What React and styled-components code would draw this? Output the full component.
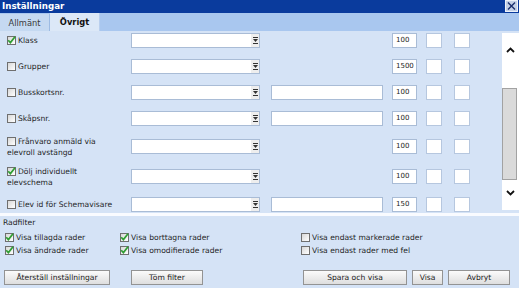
import React from 'react';
import styled, { createGlobalStyle } from 'styled-components';

const Global = createGlobalStyle`
  html, body { margin: 0; padding: 0; width: 519px; height: 288px; overflow: hidden; background: #d5e3f6; }
  body { font-family: "DejaVu Sans", Verdana, sans-serif; }
  * { box-sizing: border-box; }
`;

const Window = styled.div`
  width: 519px;
  height: 288px;
  display: flex;
  flex-direction: column;
  background: #d5e3f6;
  font-family: "DejaVu Sans", Verdana, sans-serif;
  font-size: 7.6px;
  color: #1f1f1f;
  overflow: hidden;
`;

const TitleBar = styled.div`
  height: 13px;
  flex: none;
  background: #0a3b9d;
  display: flex;
  align-items: flex-start;
  justify-content: space-between;
  padding: 0 1px 0 2px;
`;

const Title = styled.span`
  color: #ffffff;
  font-weight: bold;
  font-size: 8.7px;
  line-height: 13px;
`;

const CloseBtn = styled.div`
  width: 13px;
  height: 12px;
  border: 1px solid #eef2f9;
  background: #c4d1e7;
  display: flex;
  align-items: center;
  justify-content: center;
`;

const TabBar = styled.div`
  height: 18px;
  flex: none;
  background: #a9c7ef;
  display: flex;
  align-items: flex-end;
`;

const Tab = styled.div`
  width: 50px;
  height: ${p => (p.$active ? '18px' : '17px')};
  background: ${p => (p.$active ? '#dce8f7' : '#c5d9f1')};
  border-right: 1px solid ${p => (p.$active ? '#b9cfee' : '#9dbbe3')};
  display: flex;
  align-items: center;
  justify-content: center;
  font-size: 8.3px;
  font-weight: ${p => (p.$active ? 'bold' : 'normal')};
  color: ${p => (p.$active ? '#111' : '#3a3a3a')};
`;

const ScrollArea = styled.div`
  height: 182px;
  flex: none;
  display: flex;
  overflow: hidden;
`;

const List = styled.div`
  flex: 1;
  margin-top: -3.5px;
  display: flex;
  flex-direction: column;
`;

const Row = styled.div`
  display: grid;
  grid-template-columns: 131px 140px 121px 34px 28px 16px;
  align-items: center;
  min-height: 26px;
  padding: 4px 0;
  flex: none;
`;

const Label = styled.div`
  padding: 0 10px 0 7px;
  line-height: 11px;
`;

const Box = styled.span`
  display: inline-flex;
  align-items: center;
  justify-content: center;
  width: 9px;
  height: 9px;
  border: 1px solid #6f6f6f;
  background: linear-gradient(135deg, #d8d8d8, #ffffff);
  vertical-align: -2px;
  margin-right: ${p => p.$gap || 2}px;
  flex: none;
  overflow: visible;
`;

const Select = styled.div`
  width: 129px;
  height: 15px;
  background: #ffffff;
  border: 1px solid #a9bcd6;
  display: flex;
  justify-content: flex-end;
`;

const SelectArrow = styled.div`
  width: 8px;
  height: 100%;
  background: #eeeeee;
  display: flex;
  align-items: center;
  justify-content: center;
`;

const Field = styled.div`
  width: ${p => p.$w}px;
  height: 15px;
  background: #ffffff;
  border: 1px solid ${p => p.$border || '#a9bcd6'};
  padding: 0 3px;
  font-size: 7px;
  line-height: 13px;
  color: #222;
  white-space: nowrap;
`;

const Scrollbar = styled.div`
  width: 17px;
  flex: none;
  margin: 2px 0 3px;
  background: #ffffff;
  display: flex;
  flex-direction: column;
`;

const ArrowBtn = styled.div`
  height: ${p => p.$h}px;
  margin-top: ${p => p.$mt || 0}px;
  display: flex;
  align-items: center;
  justify-content: center;
  flex: none;
`;

const Thumb = styled.div`
  width: 15px;
  height: 92px;
  margin-top: 21px;
  background: #dadada;
  border: 1px solid #a2a2a2;
  flex: none;
`;

const Separator = styled.div`
  height: 3px;
  flex: none;
  background: #f9fbff;
`;

const Footer = styled.div`
  flex: 1;
  padding: 1px 9px 0 3px;
  display: flex;
  flex-direction: column;
`;

const FilterTitle = styled.div`
  line-height: 11px;
`;

const FilterGrid = styled.div`
  margin: 3px 0 0 2px;
  display: grid;
  grid-template-columns: 115px 181px 1fr;
  grid-auto-rows: 13px;
  align-items: center;
`;

const FilterItem = styled.div`
  display: flex;
  align-items: center;
  white-space: nowrap;
  line-height: 11px;
`;

const ButtonRow = styled.div`
  margin-top: 13px;
  padding-left: 1px;
  display: flex;
  justify-content: space-between;
`;

const ButtonGroup = styled.div`
  display: flex;
  gap: ${p => p.$gap}px;
`;

const Button = styled.button`
  width: ${p => p.$w}px;
  height: 15px;
  padding: 0;
  border: 1px solid #939393;
  background: linear-gradient(#fbfbfb, #dedede);
  font-family: "DejaVu Sans", Verdana, sans-serif;
  font-size: 7.6px;
  color: #222;
  line-height: 13px;
`;

const Check = ({ checked, gap }) => (
  <Box $gap={gap}>
    {checked && (
      <svg width="9" height="9" viewBox="0 0 9 9" style={{ overflow: 'visible' }}>
        <path d="M1.2 4.2 L3.4 6.6 L8 0.8" fill="none" stroke="#2f9e33" strokeWidth="1.7" />
      </svg>
    )}
  </Box>
);

const DropGlyph = () => (
  <svg width="5" height="7" viewBox="0 0 5 7">
    <rect x="0" y="0" width="5" height="1" fill="#333" />
    <path d="M0 2 L5 2 L2.5 5 Z" fill="#333" />
    <rect x="0" y="6" width="5" height="1" fill="#333" />
  </svg>
);

const Chevron = ({ up }) => (
  <svg width="9" height="6" viewBox="0 0 9 6">
    <path d={up ? 'M1 5 L4.5 1.5 L8 5' : 'M1 1 L4.5 4.5 L8 1'} fill="none" stroke="#111" strokeWidth="1.8" />
  </svg>
);

const rows = [
  { label: 'Klass', checked: true, text: false, num: '100' },
  { label: 'Grupper', checked: false, text: false, num: '1500' },
  { label: 'Busskortsnr.', checked: false, text: true, num: '100' },
  { label: 'Skåpsnr.', checked: false, text: true, num: '100' },
  { label: 'Frånvaro anmäld via elevroll avstängd', checked: false, text: false, num: '100' },
  { label: 'Dölj individuellt elevschema', checked: true, text: false, num: '100' },
  { label: 'Elev id för Schemavisare', checked: false, text: true, num: '150' },
];

const filters = [
  { label: 'Visa tillagda rader', checked: true },
  { label: 'Visa borttagna rader', checked: true },
  { label: 'Visa endast markerade rader', checked: false },
  { label: 'Visa ändrade rader', checked: true },
  { label: 'Visa omodifierade rader', checked: true },
  { label: 'Visa endast rader med fel', checked: false },
];

export default function App() {
  return (
    <>
      <Global />
      <Window>
        <TitleBar>
          <Title>Inställningar</Title>
          <CloseBtn>
            <svg width="9" height="8" viewBox="0 0 9 8">
              <path d="M1 0.5 L8 7.5 M8 0.5 L1 7.5" stroke="#1b2f6e" strokeWidth="1.4" />
            </svg>
          </CloseBtn>
        </TitleBar>
        <TabBar>
          <Tab>Allmänt</Tab>
          <Tab $active>Övrigt</Tab>
        </TabBar>
        <ScrollArea>
          <List>
            {rows.map(r => (
              <Row key={r.label}>
                <Label>
                  <Check checked={r.checked} />
                  {r.label}
                </Label>
                <Select>
                  <SelectArrow>
                    <DropGlyph />
                  </SelectArrow>
                </Select>
                {r.text ? <Field $w={112} /> : <span />}
                <Field $w={25}>{r.num}</Field>
                <Field $w={16} $border="#b6c7df" />
                <Field $w={16} $border="#b6c7df" />
              </Row>
            ))}
          </List>
          <Scrollbar>
            <ArrowBtn $h={34}>
              <Chevron up />
            </ArrowBtn>
            <Thumb />
            <ArrowBtn $h={20} $mt={3}>
              <Chevron />
            </ArrowBtn>
          </Scrollbar>
        </ScrollArea>
        <Separator />
        <Footer>
          <FilterTitle>Radfilter</FilterTitle>
          <FilterGrid>
            {filters.map(f => (
              <FilterItem key={f.label}>
                <Check checked={f.checked} gap={2} />
                {f.label}
              </FilterItem>
            ))}
          </FilterGrid>
          <ButtonRow>
            <ButtonGroup $gap={21}>
              <Button $w={106}>Återställ inställningar</Button>
              <Button $w={72}>Töm filter</Button>
            </ButtonGroup>
            <ButtonGroup $gap={5}>
              <Button $w={104}>Spara och visa</Button>
              <Button $w={31}>Visa</Button>
              <Button $w={62}>Avbryt</Button>
            </ButtonGroup>
          </ButtonRow>
        </Footer>
      </Window>
    </>
  );
}
